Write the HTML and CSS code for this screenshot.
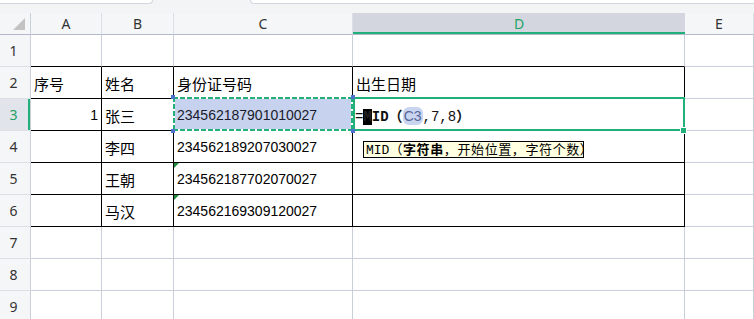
FILE: index.html
```html
<!DOCTYPE html>
<html lang="zh-CN">
<head>
    <meta charset="UTF-8">
    <title>MID</title>
    <link rel="stylesheet" href="styles.css">
</head>
<body>
    <div class="topbar">
        <div class="field field-name"></div>
        <div class="field field-formula"></div>
    </div>
    <div class="sheet">
        <div class="corner">
            <svg width="12" height="12" viewBox="0 0 12 12"><polygon points="12,0 12,12 0,12" fill="#c3c3c3"/></svg>
        </div>
        <div class="colhead">A</div>
        <div class="colhead">B</div>
        <div class="colhead">C</div>
        <div class="colhead active">D</div>
        <div class="colhead">E</div>

        <!-- 1 -->
        <div class="rowhead">1</div>
        <div class="cell top"></div>
        <div class="cell top"></div>
        <div class="cell top"></div>
        <div class="cell top"></div>
        <div class="cell"></div>

        <!-- 2 -->
        <div class="rowhead">2</div>
        <div class="cell t cn">序号</div>
        <div class="cell t cn">姓名</div>
        <div class="cell t cn">身份证号码</div>
        <div class="cell t cn">出生日期</div>
        <div class="cell"></div>

        <!-- 3 -->
        <div class="rowhead active">3</div>
        <div class="cell t right">1</div>
        <div class="cell t cn">张三</div>
        <div class="cell t selected">
            234562187901010027
            <span class="knob tl"></span><span class="knob tr"></span>
            <span class="knob bl"></span><span class="knob br"></span>
        </div>
        <div class="cell t editing">
            <span class="formula">=<span class="caret">M</span><b>ID（</b><span class="ref">C3</span>,7,8<b>）</b></span>
            <span class="handle"></span>
        </div>
        <div class="cell"></div>

        <!-- 4 -->
        <div class="rowhead">4</div>
        <div class="cell t"></div>
        <div class="cell t cn">李四</div>
        <div class="cell t">234562189207030027</div>
        <div class="cell t hint-cell">
            <div class="hint"><span class="mono">MID</span>（<b>字符串</b>，开始位置，字符个数）</div>
        </div>
        <div class="cell"></div>

        <!-- 5 -->
        <div class="rowhead">5</div>
        <div class="cell t"></div>
        <div class="cell t cn">王朝</div>
        <div class="cell t err">234562187702070027</div>
        <div class="cell t"></div>
        <div class="cell"></div>

        <!-- 6 -->
        <div class="rowhead">6</div>
        <div class="cell t"></div>
        <div class="cell t cn">马汉</div>
        <div class="cell t err">234562169309120027</div>
        <div class="cell t"></div>
        <div class="cell"></div>

        <!-- 7-9 -->
        <div class="rowhead">7</div>
        <div class="cell"></div><div class="cell"></div><div class="cell"></div><div class="cell"></div><div class="cell"></div>
        <div class="rowhead">8</div>
        <div class="cell"></div><div class="cell"></div><div class="cell"></div><div class="cell"></div><div class="cell"></div>
        <div class="rowhead">9</div>
        <div class="cell"></div><div class="cell"></div><div class="cell"></div><div class="cell"></div><div class="cell"></div>
    </div>
</body>
</html>
```

FILE: styles.css
```css
body {
    margin: 0;
    background: #fff;
    font-family: "Liberation Sans", "Noto Sans CJK SC", sans-serif;
    color: #000;
    overflow: hidden;
}
.topbar {
    height: 13px;
    background: #f3f4f6;
    display: flex;
    align-items: flex-start;
}
.field {
    height: 4px;
    background: #fff;
    border: 1px solid #d3d7dd;
    border-top: none;
    box-sizing: border-box;
}
.field-name {
    width: 153px;
    border-left: none;
    border-radius: 0 0 4px 0;
}
.field-formula {
    margin-left: 97px;
    flex: 1;
    border-right: none;
    border-radius: 0 0 0 4px;
}
.sheet {
    display: grid;
    grid-template-columns: 31px 71px 72px 179px 332px 1fr;
    grid-template-rows: 22px repeat(9, 32px);
}
.corner, .colhead, .rowhead {
    background: #f5f6f8;
    color: #333;
    font-family: "Noto Sans", sans-serif;
    font-size: 14px;
    display: flex;
    align-items: center;
    justify-content: center;
    box-sizing: border-box;
}
.corner {
    border-right: 1px solid #c9cfdb;
    border-bottom: 1px solid #b1b9ca;
    justify-content: flex-end;
    align-items: flex-end;
    padding: 0 5px 4px 0;
}
.colhead {
    border-right: 1px solid #dcdfe5;
    border-bottom: 1px solid #b1b9ca;
}
.colhead.active {
    background: #d3d6de;
    color: #21a366;
    box-shadow: inset 0 -2px 0 #21b07a;
    border-right: none;
}
.rowhead {
    border-right: 1px solid #c9cfdb;
    border-bottom: 1px solid #dcdfe5;
    padding-right: 3px;
}
.rowhead.active {
    background: #e1e4ea;
    color: #21a366;
    box-shadow: inset -2px 0 0 #21b07a;
}
.cell {
    position: relative;
    box-sizing: border-box;
    border-right: 1px solid #c9cfdb;
    border-bottom: 1px solid #c9cfdb;
    display: flex;
    align-items: center;
    padding: 1px 3px 0;
    font-size: 14px;
    white-space: nowrap;
}
.cell.top {
    border-bottom-color: #000;
}
.cell.t {
    border-right-color: #000;
    border-bottom-color: #000;
}
.cn {
    font-size: 15px;
}
.right {
    justify-content: flex-end;
}
.err::before {
    content: '';
    position: absolute;
    top: 0;
    left: 0;
    border-top: 5px solid #1d8a3c;
    border-right: 5px solid transparent;
}
.selected {
    background: #c6d2ee;
    color: #1a1a2a;
}
.selected::after {
    content: '';
    position: absolute;
    top: -2px;
    left: -1px;
    right: -1px;
    bottom: -1px;
    background:
        repeating-linear-gradient(90deg, #21b07a 0 5px, #fff 5px 7px) top / 100% 2px no-repeat,
        repeating-linear-gradient(90deg, #21b07a 0 5px, #fff 5px 7px) bottom / 100% 2px no-repeat,
        repeating-linear-gradient(180deg, #21b07a 0 5px, #fff 5px 7px) left / 2px 100% no-repeat,
        repeating-linear-gradient(180deg, #21b07a 0 5px, #fff 5px 7px) right / 2px 100% no-repeat;
    z-index: 3;
}
.knob {
    position: absolute;
    width: 4px;
    height: 4px;
    background: #4e72c9;
    z-index: 4;
}
.knob.tl { top: -4px; left: -3px; }
.knob.tr { top: -4px; right: -3px; }
.knob.bl { bottom: -3px; left: -3px; }
.knob.br { bottom: -3px; right: -3px; }
.editing {
    padding-left: 2px;
}
.editing::after {
    content: '';
    position: absolute;
    top: -2px;
    left: 0;
    right: -1px;
    bottom: -1px;
    border: 2px solid #21b07a;
    z-index: 2;
}
.formula {
    font-family: "Liberation Mono", "Noto Sans CJK SC", monospace;
    font-size: 14px;
    color: #111;
}
.formula b {
    font-weight: bold;
}
.caret {
    background: #000;
    color: #222;
    font-weight: bold;
}
.ref {
    background: #c9d5ef;
    color: #56669a;
    border-radius: 6px;
    padding: 1px 1px;
    font-family: "Liberation Sans", sans-serif;
}
.handle {
    position: absolute;
    right: -3px;
    bottom: -4px;
    width: 5px;
    height: 5px;
    background: #21b07a;
    border: 1px solid #fff;
    z-index: 5;
}
.hint-cell {
    align-items: flex-start;
}
.hint {
    position: absolute;
    top: 10px;
    left: 10px;
    width: 221px;
    height: 17px;
    box-sizing: border-box;
    border: 1px solid #000;
    background: #ffffe1;
    font-size: 13px;
    line-height: 15px;
    padding: 0 2px;
    letter-spacing: 0.6px;
    z-index: 6;
}
.mono {
    font-family: "Liberation Mono", monospace;
    letter-spacing: 0;
}
```
